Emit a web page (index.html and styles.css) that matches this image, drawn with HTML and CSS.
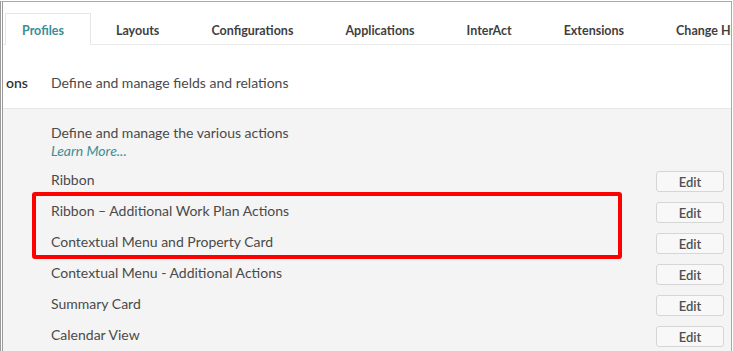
FILE: index.html
```html
<!DOCTYPE html>
<html lang="en">
<head>
<meta charset="utf-8">
<title>Profiles</title>
<link rel="stylesheet" href="styles.css">
</head>
<body>
<div class="frame">
  <nav class="tabs">
    <span class="tab active">Profiles</span>
    <span class="tab">Layouts</span>
    <span class="tab">Configurations</span>
    <span class="tab">Applications</span>
    <span class="tab">InterAct</span>
    <span class="tab">Extensions</span>
    <span class="tab">Change History</span>
  </nav>
  <section class="summary">
    <span class="summary-label">ons</span>
    <span class="summary-text">Define and manage fields and relations</span>
  </section>
  <section class="actions">
    <div class="intro">
      <div>Define and manage the various actions</div>
      <a class="learn">Learn More...</a>
    </div>
    <div class="row"><span>Ribbon</span><button class="edit">Edit</button></div>
    <div class="row"><span>Ribbon – Additional Work Plan Actions</span><button class="edit">Edit</button></div>
    <div class="row"><span>Contextual Menu and Property Card</span><button class="edit">Edit</button></div>
    <div class="row"><span>Contextual Menu - Additional Actions</span><button class="edit">Edit</button></div>
    <div class="row"><span>Summary Card</span><button class="edit">Edit</button></div>
    <div class="row"><span>Calendar View</span><button class="edit">Edit</button></div>
    <div class="highlight"></div>
  </section>
</div>
</body>
</html>
```
FILE: styles.css
```css
* { box-sizing: border-box; }
html, body { margin: 0; padding: 0; background: #fff; }
body {
  font-family: Lato, "Noto Sans", sans-serif;
  font-size: 14px;
  color: #4a4a4a;
  width: 733px;
  height: 351px;
  overflow: hidden;
}
.frame {
  width: 732px;
  height: 351px;
  border-top: 1px solid #a8a8a8;
  border-left: 3px double #9a9a9a;
  border-right: 1px solid #a8a8a8;
  margin-top: 1px;
  overflow: hidden;
  background: #fff;
}
.tabs {
  display: flex;
  align-items: flex-end;
  height: 43px;
  padding-left: 2px;
  border-bottom: 1px solid #ebebeb;
  white-space: nowrap;
}
.tab {
  font-weight: 700;
  font-size: 12.5px;
  color: #3f3f3f;
  padding: 4px 26px 0;
  height: 31px;
  line-height: 27px;
  flex: none;
}
.tab.active {
  color: #3d8d95;
  height: 32px;
  padding: 3px 26px 0 16px;
  border: 1px solid #e6e6e6;
  border-bottom: none;
  background: #fff;
  margin-bottom: -1px;
  margin-right: -1px;
}
.tab.active + .tab { padding-left: 26px; }
.summary {
  display: flex;
  height: 64px;
  padding: 29px 0 0 3px;
  line-height: 18px;
  border-bottom: 1px solid #e8e8e8;
}
.summary-label {
  width: 45px;
  color: #333;
  font-weight: 600;
}
.summary-text { color: #4a4a4a; }
.actions {
  position: relative;
  background: #f4f4f4;
  height: 260px;
  padding: 15px 0 0 48px;
}
.intro { line-height: 18px; margin-bottom: 6px; }
.learn {
  color: #3d8d95;
  font-style: italic;
}
.row {
  display: flex;
  align-items: center;
  justify-content: space-between;
  height: 31px;
  padding-right: 7px;
}
.row span { margin-top: -4px; }
.edit {
  width: 68px;
  height: 21px;
  font-family: Lato, "Noto Sans", sans-serif;
  font-size: 13px;
  font-weight: 600;
  color: #505050;
  background: #f8f8f8;
  border: 1px solid #d6d6d6;
  border-radius: 3px;
  padding: 0;
}
.highlight {
  position: absolute;
  left: 29px;
  top: 83px;
  width: 590px;
  height: 67px;
  border: 4px solid #ff0000;
  border-radius: 3px;
}
```
